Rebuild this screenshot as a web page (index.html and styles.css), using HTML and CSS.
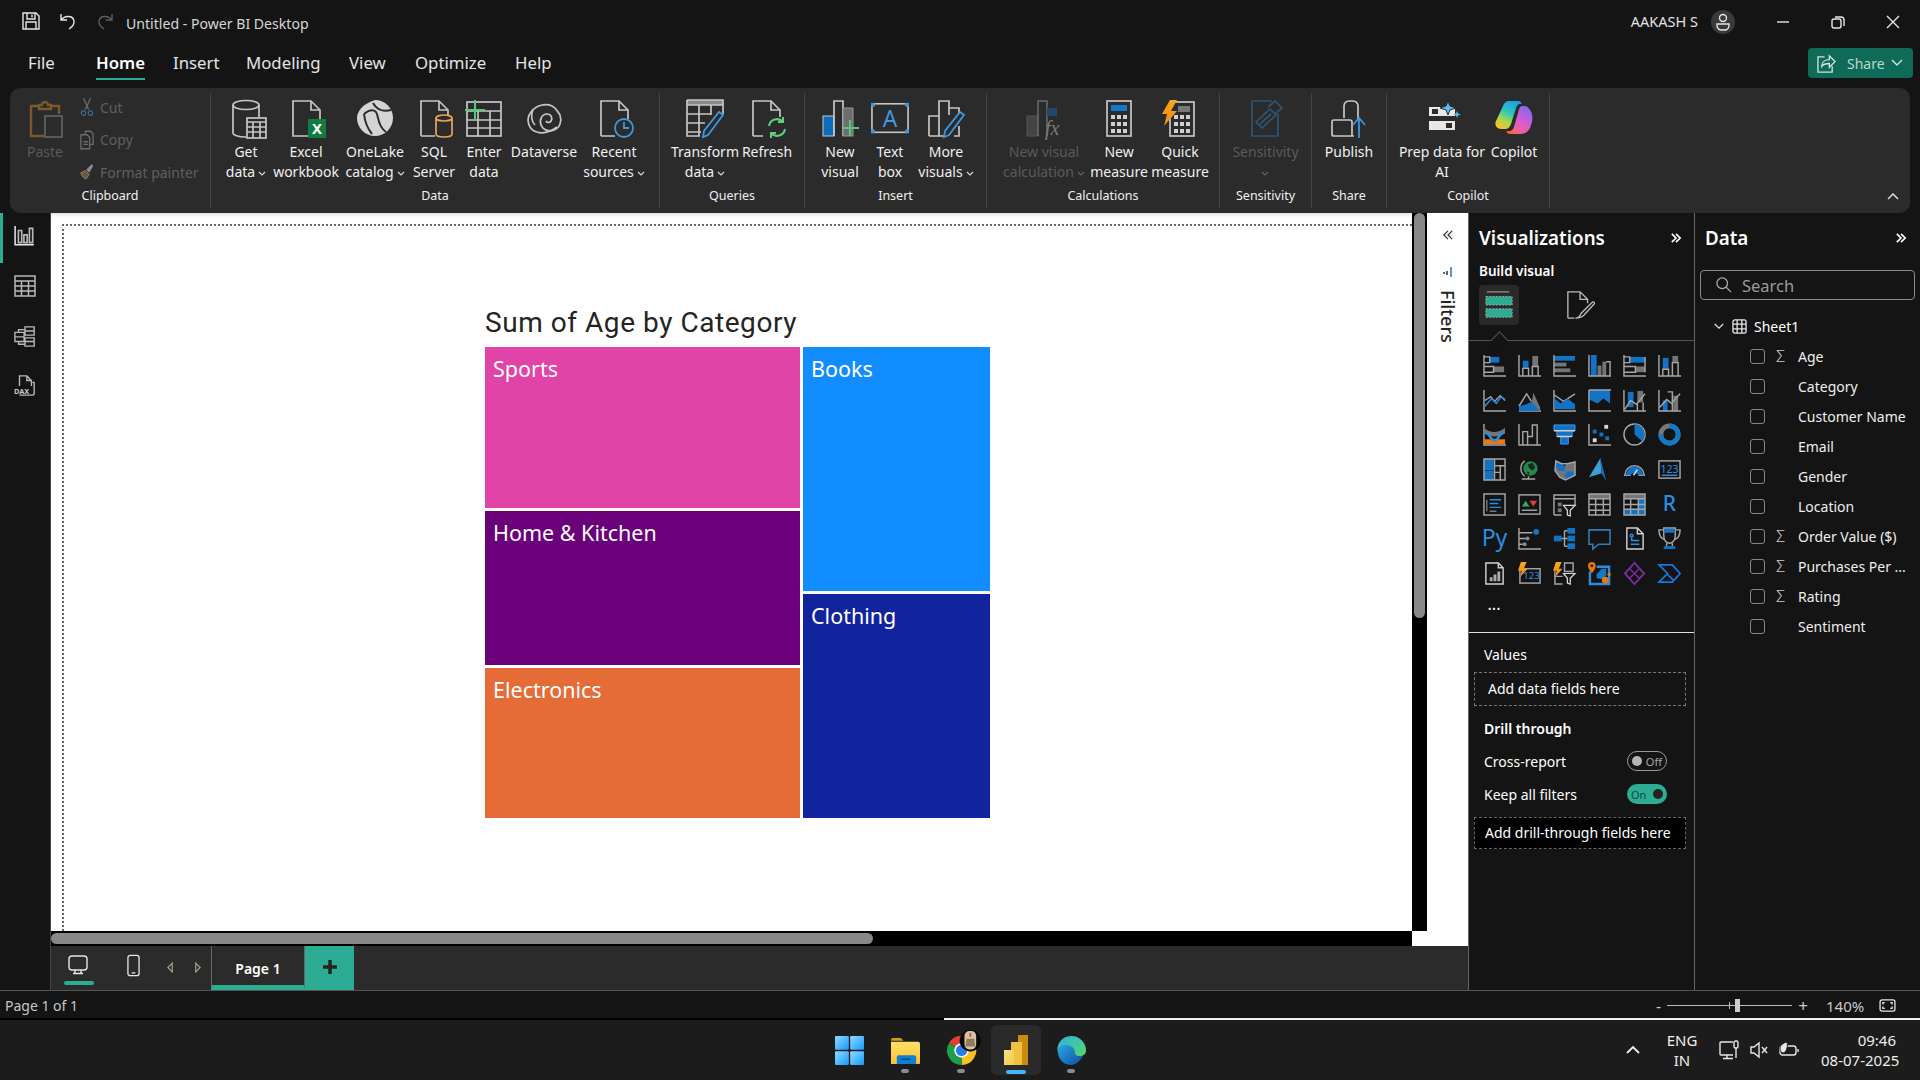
FILE: index.html
```html
<!DOCTYPE html>
<html lang="en">
<head>
<meta charset="utf-8">
<title>Untitled - Power BI Desktop</title>
<link rel="stylesheet" href="styles.css">
</head>
<body>
<svg class="defs" width="0" height="0">
  <defs>
    <linearGradient id="cp2" x1=".7" y1="0" x2=".2" y2="1"><stop offset="0" stop-color="#1c9fe8"/><stop offset=".4" stop-color="#2fc4c0"/><stop offset=".7" stop-color="#a8d84a"/><stop offset="1" stop-color="#ffbe2e"/></linearGradient>
    <linearGradient id="cp3" x1=".8" y1="0" x2=".2" y2="1"><stop offset="0" stop-color="#7a6cf0"/><stop offset=".5" stop-color="#d85cd0"/><stop offset=".8" stop-color="#f0609a"/><stop offset="1" stop-color="#f4692e"/></linearGradient>
    <linearGradient id="win" x1="0" y1="0" x2="1" y2="1"><stop offset="0" stop-color="#8fdcff"/><stop offset="1" stop-color="#1499ff"/></linearGradient>
    <linearGradient id="fold" x1="0" y1="0" x2="0" y2="1"><stop offset="0" stop-color="#ffe06a"/><stop offset="1" stop-color="#fcc22c"/></linearGradient>
    <linearGradient id="pb1" x1="0" y1="0" x2="1" y2="1"><stop offset="0" stop-color="#f9e27e"/><stop offset="1" stop-color="#eec94e"/></linearGradient>
    <linearGradient id="edge" x1="0" y1="0" x2="1" y2="1"><stop offset="0" stop-color="#2fb3e0"/><stop offset="1" stop-color="#53d86a"/></linearGradient>
    <linearGradient id="edge2" x1="0" y1="0" x2="1" y2="1"><stop offset="0" stop-color="#2ba6e8"/><stop offset="1" stop-color="#0c4f9e"/></linearGradient>
    <linearGradient id="lb" x1="0" y1="0" x2="0" y2="1"><stop offset="0" stop-color="#f7a81c"/><stop offset="1" stop-color="#f08a12"/></linearGradient>
  </defs>
</svg>
<div class="app">

<header class="titlebar">
  <svg class="tb-ic" viewBox="0 0 20 20"><path class="w" d="M2 2h13l3 3v13H2zM6 2v6h8V2M5 18v-7h10v7"/><path class="w" d="M11 3.500v3"/></svg>
  <svg class="tb-ic" viewBox="0 0 20 20"><path class="w" d="M3 3v6h6M3 9c4-5 13-5 13 2 0 3-2 5-5 7"/></svg>
  <svg class="tb-ic" viewBox="0 0 20 20"><path class="dim" d="M17 3v6h-6M17 9c-4-5-13-5-13 2 0 3 2 5 5 7"/></svg>
  <span class="doc-title">Untitled - Power BI Desktop</span>
  <span class="user">AAKASH S</span>
  <svg class="avatar" viewBox="0 0 24 24"><circle cx="12" cy="12" r="12" fill="#3a3a3a"/><circle class="w" cx="12" cy="8" r="3.500"/><path class="w" d="M6 14h12v1.500a4.500 4.500 0 0 1-4.500 4.500h-3A4.500 4.500 0 0 1 6 15.500z"/></svg>
  <div class="winbtns">
    <span class="winbtn"><svg viewBox="0 0 14 14"><path class="w" d="M1 7h12"/></svg></span>
    <span class="winbtn"><svg viewBox="0 0 14 14"><rect class="w" x="1" y="4" width="9" height="9" rx="2"/><path class="w" d="M4 2h6a3 3 0 0 1 3 3v6"/></svg></span>
    <span class="winbtn"><svg viewBox="0 0 14 14"><path class="w" d="M1 1l12 12M13 1L1 13"/></svg></span>
  </div>
</header>

<nav class="tabsbar">
  <div class="tabs">
    <span class="tab">File</span>
    <span class="tab on"><b>Home</b></span>
    <span class="tab">Insert</span>
    <span class="tab">Modeling</span>
    <span class="tab">View</span>
    <span class="tab">Optimize</span>
    <span class="tab">Help</span>
  </div>
  <div class="share">
    <svg viewBox="0 0 20 20"><path class="s" d="M8 3H1v16h15v-6"/><path class="s" d="M5 13c0-5 4-7 8-7V2l6 6-6 6v-4c-3 0-6 0-8 3z"/></svg>
    <span>Share</span>
    <svg class="sh-cv" viewBox="0 0 12 8"><path class="s" d="M1 1l5 5 5-5"/></svg>
  </div>
</nav>

<section class="ribbon">
  <div class="grp g-clip">
    <div class="btns clipb">
      <div class="btn off">
        <svg class="ri" viewBox="0 0 38 38"><path class="brn" d="M13 5h3a3 3 0 0 1 6 0h3v4H13zM13 6H5v30h13M25 6h8v8"/><rect class="dimline" x="19" y="16" width="17" height="21"/></svg>
        <span>Paste</span>
      </div>
      <div class="smalls">
        <div class="small"><svg viewBox="0 0 16 22"><path class="dimline" d="M4 1l6 13M12 1L6 14"/><circle class="dimblue" cx="4" cy="18" r="2.500"/><circle class="dimblue" cx="12" cy="18" r="2.500"/></svg><span>Cut</span></div>
        <div class="small"><svg viewBox="0 0 16 22"><path class="dimline" d="M6 5V1h6l3 3v12h-4M1 5h7l3 3v13H1zM4 13h5M4 16h5"/></svg><span>Copy</span></div>
        <div class="small"><svg viewBox="0 0 18 22"><path class="gold" d="M1 12l6-3 5 5-4 6c-3 0-6-4-7-8z"/><path class="dimfill" d="M8 8l7-7 2 2-5 9z"/></svg><span>Format painter</span></div>
      </div>
    </div>
    <div class="gl">Clipboard</div>
  </div>

  <div class="grp g-data">
    <div class="btns">
      <div class="btn"><svg class="ri" viewBox="0 0 38 38"><ellipse class="r" cx="19" cy="5" rx="13" ry="4.500"/><path class="r" d="M6 5v28c0 2 5 4 13 4M32 5v12"/><rect class="r fillbg" x="20" y="18" width="19" height="20"/><path class="r" d="M20 22h19M20 27h19M20 32h19M26 22v16M33 22v16"/></svg><span>Get<br>data<svg class="cv" viewBox="0 0 8 6"><path class="c" d="M1 1l3 3 3-3"/></svg></span></div>
      <div class="btn"><svg class="ri" viewBox="0 0 38 38"><path class="r" d="M6 1h18l9 9v26H6zM24 1v9h9"/><rect x="21" y="19" width="18" height="19" fill="#107c41"/><text class="xl" x="30" y="34">X</text></svg><span>Excel<br>workbook</span></div>
      <div class="btn"><svg class="ri" viewBox="0 0 38 38"><path d="M19 0c10 0 18 8 18 18s-8 18-18 18S1 28 1 18C1 12 6 4 19 0z" fill="#d4d4d4"/><path d="M17 3c4 7 11 9 18 7M8 14c5-4 9-5 12-2 3 4 1 14 10 20M8 14c1 8 3 14 8 20" fill="none" stroke="#2b2b2b" stroke-width="2"/></svg><span>OneLake<br>catalog<svg class="cv" viewBox="0 0 8 6"><path class="c" d="M1 1l3 3 3-3"/></svg></span></div>
      <div class="btn"><svg class="ri" viewBox="0 0 38 38"><path class="r" d="M6 36V1h18l9 9v6M24 1v9h9M6 36h14"/><ellipse class="org" cx="29" cy="18" rx="8" ry="3"/><path class="org" d="M21 18v16c0 4 16 4 16 0V18"/></svg><span>SQL<br>Server</span></div>
      <div class="btn"><svg class="ri" viewBox="0 0 38 38"><rect class="r" x="2" y="2" width="34" height="34"/><path class="r" d="M2 11h34M2 20h34M2 28h34M13 11v25M25 11v25"/><path class="gre" d="M0 10h20M10 0v20"/></svg><span>Enter<br>data</span></div>
      <div class="btn"><svg class="ri" viewBox="0 0 38 38"><path class="r" d="M12 32C4 30 0 20 6 12 11 5 21 3 27 6c4 2 6 6 8 9 2 6 0 13-6 15-5 2-11 0-13-5-2-5 1-11 6-11 4 0 6 4 4 7-1 2-4 2-5 0"/><path class="r" d="M12 32c5 2 14 0 20-5M8 9c-2 6-2 12 2 16"/></svg><span>Dataverse</span></div>
      <div class="btn"><svg class="ri" viewBox="0 0 38 38"><path class="r" d="M6 36V1h18l9 9v9M24 1v9h9M6 36h14"/><circle class="blu" cx="29" cy="28" r="9"/><path class="blu" d="M29 22v6h5"/></svg><span>Recent<br>sources<svg class="cv" viewBox="0 0 8 6"><path class="c" d="M1 1l3 3 3-3"/></svg></span></div>
    </div>
    <div class="gl">Data</div>
  </div>

  <div class="grp g-query">
    <div class="btns">
      <div class="btn"><svg class="ri" viewBox="0 0 38 38"><rect x="1" y="0" width="36" height="5" fill="#8a8a8a"/><path class="r" d="M1 0h36v14M1 0v36h13M1 5h36M1 14h24M1 23h18M1 32h14M13 5v31M25 5v10"/><path class="blu" d="M33 12l4 3-15 20-5 2 1-6z"/></svg><span>Transform<br>data<svg class="cv" viewBox="0 0 8 6"><path class="c" d="M1 1l3 3 3-3"/></svg></span></div>
      <div class="btn"><svg class="ri" viewBox="0 0 38 38"><path class="r" d="M5 36V1h18l9 9v7M23 1v9h9M5 36h10"/><path class="gre2" d="M21 26a8 8 0 0 1 14-4M37 29a8 8 0 0 1-14 4M35 17v5h-5M23 38v-5h5"/></svg><span>Refresh</span></div>
    </div>
    <div class="gl">Queries</div>
  </div>

  <div class="grp g-insert">
    <div class="btns">
      <div class="btn"><svg class="ri" viewBox="0 0 38 38"><rect x="2" y="16" width="11" height="20" fill="#0f6cbd" stroke="#c8c8c8"/><path class="r" d="M13 36V1h9v35"/><rect x="22" y="8" width="10" height="28" fill="#6e6e6e" stroke="#999"/><path class="gre" d="M22 28h16M29 20v16"/></svg><span>New<br>visual</span></div>
      <div class="btn"><svg class="ri" viewBox="0 0 40 38"><rect class="r" x="1" y="3" width="38" height="30"/><g fill="#3f97dc"><rect x="0" y="2" width="4" height="4"/><rect x="36" y="2" width="4" height="4"/><rect x="0" y="30" width="4" height="4"/><rect x="36" y="30" width="4" height="4"/></g><text class="alet" x="20" y="27">A</text></svg><span>Text<br>box</span></div>
      <div class="btn"><svg class="ri" viewBox="0 0 38 38"><path class="r" d="M2 36V16h10M12 36V1h10v14M22 8h10v6M2 36h15M27 36h5V26"/><path class="blu" d="M33 12l4 3-15 20-5 2 1-6z"/></svg><span>More<br>visuals<svg class="cv" viewBox="0 0 8 6"><path class="c" d="M1 1l3 3 3-3"/></svg></span></div>
    </div>
    <div class="gl">Insert</div>
  </div>

  <div class="grp g-calc">
    <div class="btns">
      <div class="btn off"><svg class="ri" viewBox="0 0 38 38"><rect x="2" y="16" width="11" height="20" fill="#444" stroke="#555"/><path class="dimline" d="M13 36V1h9v35"/><rect x="22" y="8" width="10" height="8" fill="#1f4a6e"/><text class="fx" x="20" y="35">fx</text></svg><span>New visual<br>calculation<svg class="cv" viewBox="0 0 8 6"><path class="cd" d="M1 1l3 3 3-3"/></svg></span></div>
      <div class="btn"><svg class="ri" viewBox="0 0 26 38"><rect class="r" x="1" y="1" width="24" height="35"/><rect x="5" y="5" width="16" height="6" fill="#1278c8"/><g fill="#d0d0d0"><rect x="5" y="15" width="4" height="4"/><rect x="11" y="15" width="4" height="4"/><rect x="17" y="15" width="4" height="4"/><rect x="5" y="22" width="4" height="4"/><rect x="11" y="22" width="4" height="4"/><rect x="17" y="22" width="4" height="4"/><rect x="5" y="29" width="4" height="4"/><rect x="11" y="29" width="4" height="4"/><rect x="17" y="29" width="4" height="4"/></g></svg><span>New<br>measure</span></div>
      <div class="btn"><svg class="ri" viewBox="3 0 38 38"><rect class="r" x="12" y="2" width="24" height="34"/><rect x="20" y="6" width="12" height="6" fill="#777"/><g fill="#d0d0d0"><rect x="16" y="15" width="4" height="4"/><rect x="22" y="15" width="4" height="4"/><rect x="28" y="15" width="4" height="4"/><rect x="16" y="22" width="4" height="4"/><rect x="22" y="22" width="4" height="4"/><rect x="28" y="22" width="4" height="4"/><rect x="16" y="29" width="4" height="4"/><rect x="22" y="29" width="4" height="4"/><rect x="28" y="29" width="4" height="4"/></g><path d="M12 0h7l-6 11h6L6 26l3-12H4z" fill="url(#lb)"/></svg><span>Quick<br>measure</span></div>
    </div>
    <div class="gl">Calculations</div>
  </div>

  <div class="grp g-sens">
    <div class="btns">
      <div class="btn off"><svg class="ri" viewBox="0 0 36 38"><path class="sens" d="M24 1H4v35h26V14"/><path class="sens" d="M8 22L22 9l6 6-14 13zM12 24l11-10M20 7l7-6 7 7-7 6"/></svg><span>Sensitivity<br><svg class="cv cv-solo" viewBox="0 0 8 6"><path class="cd" d="M1 1l3 3 3-3"/></svg></span></div>
    </div>
    <div class="gl">Sensitivity</div>
  </div>

  <div class="grp g-share">
    <div class="btns">
      <div class="btn"><svg class="ri" viewBox="0 0 38 38"><path class="r" d="M14 18V6a5 5 0 0 1 5-5h4a5 5 0 0 1 5 5v14M14 20H4a2 2 0 0 0-2 2v12a2 2 0 0 0 2 2h20M14 20h6a2 2 0 0 1 2 2v14"/><path class="blu" d="M29 38V18M23 25l6-7 6 7"/></svg><span>Publish</span></div>
    </div>
    <div class="gl">Share</div>
  </div>

  <div class="grp g-copilot">
    <div class="btns">
      <div class="btn"><svg class="ri" viewBox="0 0 38 38"><rect x="6" y="7" width="26" height="9" fill="#e8e8e8"/><rect x="9" y="9" width="6" height="5" fill="#2b2b2b"/><rect x="6" y="21" width="26" height="9" fill="#e8e8e8"/><rect x="23" y="23" width="6" height="5" fill="#2b2b2b"/><path d="M25 1l2 5 6 2-6 2-2 5-2-5-6-2 6-2z" fill="#5ab8f5" stroke="#2b2b2b"/><path d="M34 11l1 2.500 3 1-3 1-1 2.500-1-2.500-3-1 3-1z" fill="#5ab8f5"/></svg><span>Prep data for<br>AI</span></div>
      <div class="btn"><svg class="ri" viewBox="0 0 38 38"><path d="M27 6c5 0 6 1 8 4 3 4 3 10 1 15-1 5-5 9-10 9H15c-2 0-3-1-4-3 5 1 7-1 8-4l4-14c1-4 2-7 4-7z" fill="url(#cp3)"/><path d="M14 1h9c2 0 3 1 4 3-3-1-5 1-6 4l-5 16c-1 3-3 5-6 5H6c-4 0-7-4-5-8L8 6c1-3 3-5 6-5z" fill="url(#cp2)"/></svg><span>Copilot</span></div>
    </div>
    <div class="gl">Copilot</div>
  </div>
  <svg class="collapse" viewBox="0 0 12 8"><path class="w" d="M1 7l5-5 5 5"/></svg>
</section>

<main class="main">
  <aside class="rail">
    <span class="rail-item on"><svg viewBox="0 0 20 20"><path class="w" d="M1 1v17h17"/><path class="rl" d="M4 5h3v11H4zM9 9h3v7H9zM14 3h3v13h-3z"/></svg></span>
    <span class="rail-item"><svg viewBox="0 0 22 22"><path class="rl" d="M1 1h20v20H1zM1 6h20M1 11h20M1 16h20M7.500 6v15M14.500 6v15"/></svg></span>
    <span class="rail-item"><svg viewBox="0 0 24 24"><path class="rl" d="M12 2h10v9H12zM12 6.500h10M1 8h10v10H1zM1 13h10M12 14h10v9H12zM12 18h10M5 8V5h7M5 18v3h7"/></svg></span>
    <span class="rail-item"><svg viewBox="0 0 24 24"><path class="rl" d="M6 12V1h8l5 5v6M14 1v5h5M20 8h2v12a2 2 0 0 1-2 2H6"/><text class="dax" x="0" y="21">DAX</text></svg></span>
  </aside>

  <div class="center">
    <div class="canvas">
      <div class="page"></div>
      <div class="visual">
        <div class="v-title">Sum of Age by Category</div>
        <div class="treemap">
          <div class="tm-col left">
            <div class="tile sports">Sports</div>
            <div class="tile home">Home &amp; Kitchen</div>
            <div class="tile elec">Electronics</div>
          </div>
          <div class="tm-col right">
            <div class="tile books">Books</div>
            <div class="tile cloth">Clothing</div>
          </div>
        </div>
      </div>
    </div>
    <div class="vscroll"><div class="vthumb"></div></div>
    <aside class="filters">
      <svg class="fil-cv" viewBox="0 0 12 12"><path class="k" d="M6 1L1 6l5 5M11 1L6 6l5 5"/></svg>
      <svg class="fil-ic" viewBox="0 0 12 12"><path class="k" d="M1 7h2M5 5v4"/><path class="kb" d="M9 1v10"/></svg>
      <span class="fil-t">Filters</span>
    </aside>
    <div class="hscroll"><div class="hthumb"></div></div>
    <div class="corner"></div>
    <div class="pagebar">
      <span class="pb-ic dev"><svg viewBox="0 0 20 20"><rect class="w" x="1" y="1" width="18" height="14" rx="3"/><path class="w" d="M7 15v3M13 15v3M5 18.500h10"/></svg></span>
      <span class="pb-ic phone"><svg viewBox="0 0 14 24"><rect class="w" x="1" y="1" width="12" height="22" rx="2.500"/><path class="w" d="M5 20h4"/></svg></span>
      <span class="pb-ar"><svg viewBox="0 0 8 12"><path class="ar" d="M6 1L1 6l5 5z"/></svg></span>
      <span class="pb-ar"><svg viewBox="0 0 8 12"><path class="ar" d="M2 1l5 5-5 5z"/></svg></span>
      <span class="pg-tab">Page 1</span>
      <span class="pg-add"><svg viewBox="0 0 14 14"><path d="M7 0v14M0 7h14" stroke="#252423" stroke-width="3.500"/></svg></span>
    </div>
  </div>

  <section class="viz">
    <div class="p-head"><span>Visualizations</span><svg viewBox="0 0 12 12"><path class="w2" d="M1 1l5 5-5 5M6 1l5 5-5 5"/></svg></div>
    <div class="build">Build visual</div>
    <div class="modes">
      <span class="mode on"><svg viewBox="0 0 32 32"><path d="M3 2h24" stroke="#888" stroke-width="1.500"/><rect x="2" y="7" width="28" height="9" fill="#2bac93" stroke="#aaa" stroke-dasharray="2 1.500"/><rect x="2" y="20" width="28" height="9" fill="#2bac93" stroke="#aaa" stroke-dasharray="2 1.500"/></svg></span>
      <span class="mode"><svg viewBox="0 0 32 32"><path class="lg" d="M2 30V2h13l8 8v4M15 2v8h8M2 30h7"/><path class="lg" d="M10 30c3 0 5-2 6-5l12-12c2-1 3 1 2 2L19 27c-2 2-5 3-9 3z"/></svg></span>
    </div>
    <div class="gallery">
      <i class="notch"></i>
      <svg viewBox="0 0 24 24"><rect class="b" x="7" y="3" width="10" height="6"/><rect class="g" x="11" y="13" width="11" height="6"/><path class="l" d="M1 1v22h23M1 3h6v6H1M1 13h10v6H1"/></svg>
      <svg viewBox="0 0 24 24"><rect class="b" x="5" y="7" width="6" height="8"/><rect class="g" x="15" y="2" width="6" height="11"/><path class="l" d="M1 1v22h23M5 15h6v8H5zM15 13h6v10h-6z"/></svg>
      <svg viewBox="0 0 24 24"><rect class="b" x="1" y="2" width="22" height="5"/><rect class="g" x="1" y="9" width="13" height="4"/><rect class="g" x="1" y="15" width="17" height="4"/><path class="l" d="M1 1v22h23"/></svg>
      <svg viewBox="0 0 24 24"><rect class="b" x="3" y="1" width="6" height="22"/><rect class="g" x="10" y="12" width="4" height="11"/><rect class="g" x="15" y="8" width="4" height="15"/><path class="l" d="M1 1v22h23M19 8h4v15"/></svg>
      <svg viewBox="0 0 24 24"><rect class="b" x="7" y="3" width="16" height="6"/><rect class="g" x="13" y="13" width="10" height="6"/><path class="l" d="M1 1v22h23M1 3h6v6H1M1 13h12v6H1M23 3v16"/></svg>
      <svg viewBox="0 0 24 24"><rect class="b" x="5" y="4" width="6" height="12"/><rect class="g" x="15" y="2" width="6" height="7"/><path class="l" d="M1 1v22h23M5 16h6v7H5zM15 9h6v14h-6z"/></svg>

      <svg viewBox="0 0 24 24"><path class="l" d="M1 1v22h23M2 12l6-4 4 5 6-6 5 5"/><path class="bl" d="M2 18l7-8 5 5 5-7 4 3"/></svg>
      <svg viewBox="0 0 24 24"><path class="g" d="M16 4l7 15v4H13z"/><path class="l" d="M1 18L9 5l5 8M1 23h23"/><path class="b" d="M1 23v-5l8-2 5-3 9 10z"/></svg>
      <svg viewBox="0 0 24 24"><path class="l" d="M1 1v22h23M1 6l10 7 12-8"/><path class="b" d="M1 9l7 6 7-5 8 6v5H2z"/></svg>
      <svg viewBox="0 0 24 24"><path class="b" d="M1 1h22v14l-7-5-6 5-9-4z"/><path class="l" d="M1 1h23M1 1v22h23"/></svg>
      <svg viewBox="0 0 24 24"><rect class="b" x="5" y="3" width="6" height="16"/><rect class="g" x="15" y="2" width="6" height="12"/><path class="l" d="M1 1v22h23M15 14v9M21 14v9M2 21l6-9 6 4 9-11"/></svg>
      <svg viewBox="0 0 24 24"><rect class="b" x="5" y="12" width="5" height="11"/><rect class="g" x="16" y="7" width="5" height="16"/><path class="l" d="M1 1v22h23M10 3h5v20M2 19l7-8 5 4 9-10"/></svg>

      <svg viewBox="0 0 24 24"><path class="l" d="M1 1v22h23"/><path class="g" d="M1 5c7 6 14 6 22 0v6c-7 4-15 4-22 0z"/><path class="org2" d="M1 17h22v5H1z"/><path fill="none" stroke="#2a8ee0" stroke-width="2.500" d="M2 9c5 1 5 9 10 9s5-8 10-9"/></svg>
      <svg viewBox="0 0 24 24"><path class="l" d="M1 1v22h23M5 23V9h5v14M10 14h5V2h5v21"/></svg>
      <svg viewBox="0 0 24 24"><path class="b2" d="M1 2h22v6h-3v6h-4v8H8v-8H4V8H1z"/><path class="l2" d="M1 8h22M4 14h16"/></svg>
      <svg viewBox="0 0 24 24"><path class="l" d="M1 1v22h23"/><rect class="b" x="5" y="7" width="4" height="4"/><rect class="sq" x="17" y="2" width="4" height="4"/><rect class="b" x="12" y="10" width="4" height="4"/><rect class="sq" x="5" y="16" width="4" height="4"/><rect class="b" x="18" y="14" width="4" height="4"/></svg>
      <svg viewBox="0 0 24 24"><circle class="l" cx="12" cy="12" r="11"/><path class="b" d="M12 1a11 11 0 0 1 8 18l-8-7z"/></svg>
      <svg viewBox="0 0 24 24"><circle cx="12" cy="12" r="9" fill="none" stroke="#777" stroke-width="5"/><path d="M12 3a9 9 0 1 1-9 9" fill="none" stroke="#1278c8" stroke-width="5"/></svg>

      <svg viewBox="0 0 24 24"><rect class="b" x="1" y="1" width="10" height="12"/><rect class="b" x="1" y="13.500" width="10" height="9.500"/><path class="l" d="M1 1h22v22H1zM12 1v22M12 8h11M18 8v15M12 15h6"/></svg>
      <svg viewBox="0 0 24 24"><circle cx="13" cy="11" r="7.500" fill="#1f8a4c"/><path d="M10 7l5-2 3 5-3 3-3-2zM9 14l3 1-1 3z" fill="#222"/><path class="l" d="M7 3a10 10 0 0 0 0 16M4 22h14M11 19v3"/></svg>
      <svg viewBox="0 0 24 24"><path class="g" d="M3 9l8 0 4-3 8-2v14l-6 2-4 3-6-3-5-7z"/><path class="b" d="M3 3l6 3 4 3-1 5-6-1-3-5zM14 14l8 0-1 5-6 2-3-2z"/><path class="l" d="M3 3l6 3 6 0 8-2v14l-6 3-4 2-6-3-5-7z"/></svg>
      <svg viewBox="0 0 24 24"><path d="M13 0l-12 20 13-4z" fill="#3aa0d8"/><path d="M13 0l6 24-5-8z" fill="#1b6fae"/></svg>
      <svg viewBox="0 0 24 24"><path class="l" d="M2 18a10 10 0 0 1 20 0M1 18h7M16 18h7"/><path class="b" d="M7 10a10 10 0 0 1 10 0l5 8h-5l-5-3-5 3H2z"/><path d="M11 18l4-6" stroke="#ddd" stroke-width="1.500"/></svg>
      <svg viewBox="0 0 24 24"><rect class="l" x="1" y="3" width="22" height="18"/><text class="n123" x="12" y="16">123</text><path class="bl" d="M4 18h16"/></svg>

      <svg viewBox="0 0 24 24"><rect class="l" x="1" y="1" width="22" height="22"/><path class="bl" d="M7 7h12M7 11h9M7 15h12"/><path d="M4 7v12M7 19h7" stroke="#777" stroke-width="1.500"/></svg>
      <svg viewBox="0 0 24 24"><rect class="l" x="1" y="2" width="22" height="20"/><path d="M4 14l4-6 4 6z" fill="#2fae5a"/><path d="M12 8h8l-4 6z" fill="#e03c3c"/><path class="l" d="M4 18h16"/></svg>
      <svg viewBox="0 0 24 24"><path class="l" d="M1 23V2h22v11M1 6h22M9 23H1"/><rect class="g" x="5" y="10" width="4" height="4"/><rect class="g" x="5" y="16" width="4" height="4"/><path class="f" d="M11 13h12l-5 5v6l-3-1v-5z"/></svg>
      <svg viewBox="0 0 24 24"><rect class="g" x="1" y="1" width="22" height="5"/><path class="l" d="M1 1h22v22H1zM1 6h22M1 12h22M1 18h22M8 6v17M16 6v17"/></svg>
      <svg viewBox="0 0 24 24"><rect class="g" x="1" y="1" width="22" height="5"/><rect class="b" x="16" y="6" width="7" height="17"/><rect class="b" x="1" y="17" width="22" height="6"/><path class="l" d="M1 1h22v22H1zM1 6h22M1 12h22M1 17h22M8 6v17M16 6v17"/></svg>
      <span class="gt r-t">R</span>

      <span class="gt py-t">Py</span>
      <svg viewBox="0 0 24 24"><path class="l" d="M1 1v22h23M1 6h14M1 12h9M1 18h6"/><circle cx="19" cy="5" r="3" fill="#1278c8"/><circle cx="10" cy="12" r="2" fill="#888"/><circle cx="7" cy="18" r="2" fill="#888"/></svg>
      <svg viewBox="0 0 24 24"><rect class="b" x="1" y="9" width="8" height="6"/><rect class="b" x="15" y="1" width="8" height="6"/><rect class="b" x="15" y="9" width="8" height="6"/><rect class="b" x="15" y="17" width="8" height="6"/><path class="l" d="M9 12h6M12 4v16M12 4h3M12 20h3"/></svg>
      <svg viewBox="0 0 24 24"><path class="blsq" d="M1 3h22v15H11l-6 5v-5H1z"/></svg>
      <svg viewBox="0 0 24 24"><path class="l2" d="M4 23V1h11l6 6v16zM15 1v6h6"/><circle class="bl" cx="9" cy="9" r="1.500"/><path class="bl" d="M9 11v3h8M8 18h9"/></svg>
      <svg viewBox="0 0 24 24"><path class="l" d="M6 3H1c0 6 2 9 6 10M18 3h5c0 6-2 9-6 10M9 17v3M15 17v3"/><path class="g2" d="M6 1h12v8c0 5-3 8-6 8s-6-3-6-8z"/><rect class="b" x="6" y="2" width="12" height="4"/><rect class="b" x="6" y="20" width="12" height="3"/></svg>

      <svg viewBox="0 0 24 24"><path class="l2" d="M3 23V1h13l5 5v17zM16 1v5h5"/><path d="M7 20v-4h3v4zM11 20v-7h3v7zM15 20V10h3v10z" fill="#aaa"/></svg>
      <svg viewBox="0 0 24 24"><rect class="l" x="2" y="7" width="21" height="15"/><text class="n123 small123" x="14" y="18">123</text><path d="M9 0H3L0 9h4l-2 7 8-9H6z" fill="url(#lb)"/></svg>
      <svg viewBox="0 0 24 24"><path class="l" d="M2 9v14h8M12 1h9v9h-9zM2 15h8"/><path class="f" d="M11 12h12l-5 5v6l-3-1v-5z"/><path d="M9 0H3L0 9h4l-2 7 8-9H6z" fill="url(#lb)"/></svg>
      <svg viewBox="0 0 24 24"><path d="M9 5H22V23H2V10" fill="none" stroke="#2a8ee0" stroke-width="2.500"/><path d="M9 12c3 0 3-5 7-5h3v7l-4 4-6-1z" fill="#1278c8"/><path d="M4 0a4 4 0 0 1 4 4c0 3-4 8-4 8S0 7 0 4a4 4 0 0 1 4-4z" fill="#e8770f"/><circle cx="4" cy="4" r="1.500" fill="#222"/><circle cx="18" cy="19" r="3.500" fill="#e8770f"/><circle cx="22" cy="13" r="1.800" fill="#e8770f"/></svg>
      <svg viewBox="0 0 24 24"><path d="M12 1l10 11-10 11L2 12z" fill="none" stroke="#7a2a9a" stroke-width="2"/><path d="M7 7l10 10M17 7L7 17" stroke="#7a2a9a" stroke-width="1.500"/></svg>
      <svg viewBox="0 0 24 24"><path d="M1 3h14l8 9-8 9H1l9-9zM9 12l7 7" fill="none" stroke="#1278e0" stroke-width="1.800"/></svg>

      <span class="more">•••</span>
    </div>

    <div class="f-label">Values</div>
    <div class="drop">Add data fields here</div>
    <div class="drill">Drill through</div>
    <div class="tg-row first"><span>Cross-report</span><span class="tg off-t"><i></i><em>Off</em></span></div>
    <div class="tg-row"><span>Keep all filters</span><span class="tg on-t"><em>On</em><i></i></span></div>
    <div class="drop strong">Add drill-through fields here</div>
  </section>

  <section class="data">
    <div class="p-head"><span>Data</span><svg viewBox="0 0 12 12"><path class="w2" d="M1 1l5 5-5 5M6 1l5 5-5 5"/></svg></div>
    <div class="search"><svg viewBox="0 0 18 18"><circle class="m" cx="7" cy="7" r="6"/><path class="m" d="M11.500 11.500L17 17"/></svg><span>Search</span></div>
    <div class="sheet">
      <svg class="sh-c" viewBox="0 0 12 8"><path class="w" d="M1 1l5 5 5-5"/></svg>
      <svg class="sh-t" viewBox="0 0 16 16"><rect class="w" x="1" y="1" width="14" height="14" rx="2"/><path class="w" d="M1 5.500h14M1 10.500h14M5.500 1v14M10.500 1v14"/></svg>
      <span>Sheet1</span>
    </div>
    <ul class="fields">
      <li><i class="cb"></i><span class="sig">Σ</span><span>Age</span></li>
      <li><i class="cb"></i><span class="sig"></span><span>Category</span></li>
      <li><i class="cb"></i><span class="sig"></span><span>Customer Name</span></li>
      <li><i class="cb"></i><span class="sig"></span><span>Email</span></li>
      <li><i class="cb"></i><span class="sig"></span><span>Gender</span></li>
      <li><i class="cb"></i><span class="sig"></span><span>Location</span></li>
      <li><i class="cb"></i><span class="sig">Σ</span><span>Order Value ($)</span></li>
      <li><i class="cb"></i><span class="sig">Σ</span><span>Purchases Per ...</span></li>
      <li><i class="cb"></i><span class="sig">Σ</span><span>Rating</span></li>
      <li><i class="cb"></i><span class="sig"></span><span>Sentiment</span></li>
    </ul>
  </section>
</main>

<footer class="status">
  <span class="st-page">Page 1 of 1</span>
  <div class="zoom">
    <span class="z-m">-</span>
    <span class="z-track"><i class="z-tick"></i><i class="z-thumb"></i></span>
    <span class="z-p">+</span>
    <span class="z-v">140%</span>
    <svg class="z-fit" viewBox="0 0 18 14"><rect class="w" x="1" y="1" width="16" height="12" rx="2"/><path class="w" d="M4 6V4h2M14 8v2h-2M12 4h2v2M6 10H4V8"/></svg>
  </div>
</footer>

<div class="taskbar">
  <span class="tk"><svg viewBox="0 0 30 30"><rect fill="url(#win)" x="0" y="0" width="14.300" height="14.300" rx="1"/><rect fill="url(#win)" x="15.700" y="0" width="14.300" height="14.300" rx="1"/><rect fill="url(#win)" x="0" y="15.700" width="14.300" height="14.300" rx="1"/><rect fill="url(#win)" x="15.700" y="15.700" width="14.300" height="14.300" rx="1"/></svg></span>
  <span class="tk run"><svg viewBox="0 0 30 30"><path d="M0 4a2 2 0 0 1 2-2h8l3 3h-13z" fill="#d99a0b"/><path d="M0 29V6h28a2 2 0 0 1 2 2v20a1 1 0 0 1-1 1z" fill="url(#fold)"/><path d="M6 22a2 2 0 0 1 2-2h16a2 2 0 0 1 2 2v7H6z" fill="#0f7fd4"/><path d="M10 24h10" stroke="#0a4a88" stroke-width="1.500"/></svg></span>
  <span class="tk run"><svg class="chrome" viewBox="0 0 36 36"><g transform="translate(0 6)"><path d="M15 15L2 7.500A15 15 0 0 1 28 7.500z" fill="#e0402f"/><path d="M15 15l13-7.500A15 15 0 0 1 15 30z" fill="#f8c21c"/><path d="M15 15v15A15 15 0 0 1 2 7.500z" fill="#1e9e4a"/><circle cx="15" cy="15" r="7.500" fill="#fff"/><circle cx="15" cy="15" r="5.800" fill="#2a7de8"/></g><circle cx="24" cy="11" r="11" fill="#0a0a0a"/><rect x="18" y="1" width="12" height="19" rx="5" fill="#d8c3a0"/><path d="M24 3v4" stroke="#c0506a" stroke-width="2"/><path d="M20 9h8l1 8h-10z" fill="#8e7c5c"/></svg></span>
  <span class="tk act"><svg viewBox="0 0 24 30"><rect x="14" y="0" width="10" height="30" fill="#c98c10"/><rect x="7" y="7" width="11" height="23" fill="#eec23e"/><rect x="0" y="15" width="10" height="15" fill="url(#pb1)"/></svg><i></i></span>
  <span class="tk run"><svg viewBox="0 0 30 30"><path d="M15 0a15 15 0 0 1 15 15c0 4-3 6-7 6-5 0-6-3-5-5 0-4-5-6-9-4C5 14 3 18 4 22 0 17 0 13 1 10 3 4 8 0 15 0z" fill="url(#edge)"/><path d="M1 13c3-4 8-5 12-3 4 1 5 4 5 6s2 5 5 5c2 0 3 0 4-1-2 5-7 10-13 10C6 30 0 23 1 13z" fill="url(#edge2)"/></svg></span>
  <div class="tray">
    <svg class="t-cv" viewBox="0 0 16 10"><path class="t2" d="M2 8l6-6 6 6"/></svg>
    <div class="lang">ENG<br>IN</div>
    <svg class="t-net" viewBox="0 0 20 20"><path class="w" d="M14 2H2a1 1 0 0 0-1 1v11a1 1 0 0 0 1 1h12M8 15v3M4 18.500h10"/><rect class="w" x="15" y="1" width="4" height="7" rx="1.500"/><path class="w" d="M17 8v10"/></svg>
    <svg class="t-spk" viewBox="0 0 18 16"><path class="w" d="M1 5h3l5-4v14l-5-4H1zM12 5l5 6M17 5l-5 6"/></svg>
    <svg class="t-bat" viewBox="0 0 20 16"><rect class="w" x="1" y="4" width="16" height="9" rx="2.500"/><path class="w" d="M19 7v3"/><path d="M1 7c0-4 3-6 7-7 1 3 0 9-3 11-3 0-4-2-4-4z" fill="#e8e8e8" stroke="#1c1c1c"/></svg>
    <div class="clock">09:46<br>08-07-2025</div>
  </div>
</div>

</div>
</body>
</html>
```
FILE: styles.css
```css
* { box-sizing: border-box; }
html, body { margin: 0; padding: 0; height: 100%; background: #141414; }
body { font-family: "Noto Sans", "Open Sans", sans-serif; color: #fff; overflow: hidden; font-size: 14px; }
.defs { position: absolute; }
svg { display: block; overflow: visible; flex: none; }
ul { list-style: none; margin: 0; padding: 0; }
i, em { font-style: normal; }

/* stroke helpers */
.w { fill: none; stroke: #e6e6e6; stroke-width: 1.4; }
.w2 { fill: none; stroke: #fff; stroke-width: 2; }
.dim { fill: none; stroke: #5e5e5e; stroke-width: 1.4; }
.s { fill: none; stroke: #cfe5df; stroke-width: 1.4; }
.c { fill: none; stroke: #ddd; stroke-width: 1.1; }
.cd { fill: none; stroke: #666; stroke-width: 1.1; }
.r { fill: none; stroke: #c6c6c6; stroke-width: 1.7; }
.fillbg { fill: #2b2b2b; }
.blu { fill: none; stroke: #3f97dc; stroke-width: 1.8; }
.gre { fill: none; stroke: #58c978; stroke-width: 2; }
.gre2 { fill: none; stroke: #5fd07f; stroke-width: 2; }
.org { fill: none; stroke: #e3a55a; stroke-width: 1.7; }
.brn { fill: none; stroke: #7a5a28; stroke-width: 2.4; }
.dimline { fill: none; stroke: #6a6a6a; stroke-width: 1.5; }
.dimblue { fill: none; stroke: #3d6a90; stroke-width: 1.3; }
.gold { fill: #6e5a34; stroke: #8d8d8d; stroke-width: 1; }
.dimfill { fill: #8d8d8d; }
.sens { fill: none; stroke: #2f5472; stroke-width: 1.7; }
.xl { fill: #fff; font: 700 15px "Noto Sans", sans-serif; text-anchor: middle; }
.alet { fill: #3f97dc; font: 400 24px "Noto Sans", sans-serif; text-anchor: middle; }
.fx { fill: #7a7a7a; font: italic 20px "Liberation Serif", serif; }
.k { fill: none; stroke: #333; stroke-width: 1.5; }
.kb { fill: none; stroke: #2a70b8; stroke-width: 1.5; }
.rl { fill: none; stroke: #b8b8b8; stroke-width: 1.5; }
.dax { fill: #c8c8c8; font: 700 8px "Noto Sans", sans-serif; }
.lg { fill: none; stroke: #bdbdbd; stroke-width: 1.4; }
.ar { fill: none; stroke: #b0a78f; stroke-width: 1.3; }
.m { fill: none; stroke: #aaa; stroke-width: 1.4; }
.t2 { fill: none; stroke: #eee; stroke-width: 1.8; }

/* gallery shapes */
.l { fill: none; stroke: #a6a6a6; stroke-width: 1.5; }
.l2 { fill: none; stroke: #d0d0d0; stroke-width: 1.5; }
.bl { fill: none; stroke: #2a8ee0; stroke-width: 1.5; }
.blsq { fill: none; stroke: #2d7fb8; stroke-width: 1.6; }
.b { fill: #1273c4; }
.b2 { fill: #1273c4; stroke: #3c9be6; stroke-width: 1; }
.g { fill: #757575; }
.g2 { fill: none; stroke: #a6a6a6; stroke-width: 1.5; }
.f { fill: #1a1a1a; stroke: #d8d8d8; stroke-width: 1.3; }
.sq { fill: #d8d8d8; }
.org2 { fill: #ea7a12; }
.n123 { fill: #2a8ee0; font: 400 11px "Noto Sans", sans-serif; text-anchor: middle; }
.small123 { font-size: 10px; }

.app { width: 1920px; height: 1080px; display: flex; flex-direction: column; background: #141414; }

/* title bar */
.titlebar { height: 44px; display: flex; align-items: center; padding-left: 21px; flex: none; }
.tb-ic { width: 20px; height: 20px; margin-right: 17px; margin-top: -2px; }
.doc-title { margin-left: -6px; margin-top: 2px; font-size: 14.100px; color: #d6d6d6; }
.user { margin-left: auto; margin-right: 13px; margin-top: -2px; font-size: 14.500px; color: #e2e2e2; }
.avatar { width: 24px; height: 24px; }
.winbtns { display: flex; margin-left: 20px; }
.winbtn { width: 55px; display: flex; justify-content: center; }
.winbtn svg { width: 14px; height: 14px; }

/* tabs */
.tabsbar { height: 44px; flex: none; display: flex; align-items: flex-start; padding-left: 28px; padding-right: 7px; }
.tabs { display: grid; grid-template-columns: 68px 77px 73px 103px 66px 100px auto; font-size: 16.800px; color: #e4e4e4; height: 36px; line-height: 37px; }
.tab b { display: inline-block; height: 36px; font-weight: 600; color: #fff; border-bottom: 2px solid #2bac93; }
.share { margin-left: auto; margin-top: 4px; width: 105px; height: 30px; background: #0f6b58; border-radius: 4px; display: flex; align-items: center; padding-left: 9px; color: #b9d8cf; font-size: 14px; }
.share svg { width: 19px; height: 19px; margin-right: 11px; }
.share .sh-cv { width: 12px; height: 8px; margin: 0 0 0 6px; }

/* ribbon */
.ribbon { position: relative; height: 125px; flex: none; margin: 0 10px; background: #2b2b2b; border-radius: 10px; padding: 5px 0; display: flex; }
.grp { height: 115px; padding-top: 7px; border-right: 1px solid #444; flex: none; }
.btns { height: 86px; display: grid; justify-content: start; }
.g-clip { width: 201px; }
.g-data { width: 449px; }
.g-data .btns { padding-left: 5px; grid-template-columns: 60px 60px 78px 40px 60px 60px 80px; }
.g-query { width: 145px; }
.g-query .btns { padding-left: 5px; grid-template-columns: 80px 44px; }
.g-insert { width: 182px; }
.g-insert .btns { padding-left: 5px; grid-template-columns: 60px 40px 72px; }
.g-calc { width: 233px; }
.g-calc .btns { padding-left: 5px; grid-template-columns: 104px 46px 76px; }
.g-sens { width: 92px; }
.g-sens .btns { grid-template-columns: 91px; }
.g-share { width: 75px; }
.g-share .btns { grid-template-columns: 74px; }
.g-copilot { width: 163px; }
.g-copilot .btns { padding-left: 5px; grid-template-columns: 100px 44px; }
.clipb { display: flex; }
.btn { display: flex; flex-direction: column; align-items: center; font-size: 14px; line-height: 20px; color: #f0f0f0; text-align: center; white-space: nowrap; }
.btn > span { display: block; }
.btn.off { color: #5a5a5a; }
.clipb .btn { width: 70px; }
.ri { width: 38px; height: 38px; margin-bottom: 4px; }
.cv { display: inline-block; width: 8px; height: 6px; margin-left: 3px; vertical-align: 0; }
.cv-solo { margin-left: 0; }
.gl { text-align: center; font-size: 12.500px; line-height: 20px; color: #f0f0f0; }
.smalls { margin-top: -9px; }
.small { height: 32.500px; display: flex; align-items: center; font-size: 14px; color: #5f5f5f; white-space: nowrap; }
.small svg { width: 14px; height: 20px; margin-right: 6px; }
.collapse { position: absolute; right: 11px; bottom: 13px; width: 12px; height: 8px; }

/* main */
.main { flex: 1; min-height: 0; display: flex; }
.rail { width: 51px; flex: none; border-right: 1px solid #444; display: flex; flex-direction: column; }
.rail-item { height: 50px; display: flex; align-items: center; justify-content: center; position: relative; }
.rail-item svg { width: 22px; height: 22px; margin-top: -4px; }
.rail-item.on::before { content: ""; position: absolute; left: 0; top: 0; bottom: 0; width: 3px; background: #2bac93; }

.center { width: 1417px; flex: none; display: grid; grid-template-columns: 1361px 15px 41px; grid-template-rows: 718px 15px 44px; }
.canvas { position: relative; background: #fff; box-shadow: inset 0 5px 4px -4px rgba(0,0,0,.18); overflow: hidden; }
.page { position: absolute; left: 11px; top: 11px; right: 0; bottom: 0; border-left: 2px dotted #666; border-top: 2px dotted #666; }
.visual { position: absolute; left: 434px; top: 92px; width: 506px; }
.v-title { font-family: Roboto, sans-serif; font-size: 28px; letter-spacing: .55px; line-height: 36px; color: #252423; height: 42px; white-space: nowrap; }
.treemap { display: flex; gap: 3px; height: 471px; }
.tm-col { display: flex; flex-direction: column; gap: 3px; }
.tm-col.left { width: 315px; }
.tm-col.right { width: 187px; }
.tile { padding: 7px 8px; font-size: 21.500px; line-height: 30px; color: #fff; }
.sports { height: 161px; background: #E044A7; }
.home { height: 154px; background: #6B007B; }
.elec { flex: 1; background: #E66C37; }
.books { height: 244px; background: #118DFF; }
.cloth { flex: 1; background: #12239E; }

.vscroll { background: #000; position: relative; grid-column: 2; grid-row: 1; }
.vthumb { position: absolute; left: 2px; right: 2px; top: 0; height: 405px; background: #8a8886; border-radius: 6px 6px 6px 6px; }
.filters { grid-column: 3; grid-row: 1 / 3; background: #fff; display: flex; flex-direction: column; align-items: center; }
.fil-cv { width: 10px; height: 10px; margin-top: 17px; }
.fil-ic { width: 12px; height: 12px; margin-top: 26px; }
.fil-t { writing-mode: vertical-rl; color: #252423; font-size: 18px; line-height: 20px; margin-top: 12px; font-weight: 500; }
.hscroll { grid-column: 1; grid-row: 2; background: #000; position: relative; }
.hthumb { position: absolute; left: 0; top: 2px; bottom: 2px; width: 822px; background: #8a8886; border-radius: 6px; }
.corner { grid-column: 2; grid-row: 2; background: #fff; }
.pagebar { grid-column: 1 / 4; grid-row: 3; background: #2b2b2b; display: flex; align-items: stretch; }
.pb-ic { display: flex; position: relative; justify-content: center; }
.pb-ic.dev { width: 54px; padding-top: 9px; }
.pb-ic.dev svg { width: 20px; height: 20px; }
.pb-ic.dev::after { content: ""; position: absolute; left: 13px; width: 30px; top: 35px; height: 4px; border-radius: 2px; background: #2bac93; }
.pb-ic.phone { width: 52px; padding: 8px 0 0 4px; }
.pb-ic.phone svg { width: 13px; height: 23px; }
.pb-ar { width: 27px; display: flex; justify-content: center; padding-top: 16px; }
.pb-ar svg { width: 7px; height: 11px; }
.pg-tab { width: 94px; border-left: 1px solid #666; border-right: 1px solid #666; border-bottom: 5px solid #2bac93; font-weight: 600; font-size: 14px; text-align: center; line-height: 46px; height: 44px; }
.pg-add { width: 49px; background: #2bac93; display: flex; align-items: center; justify-content: center; }
.pg-add svg { width: 14px; height: 14px; margin-top: -3px; }

/* panes */
.viz { width: 227px; flex: none; border-left: 1px solid #666; border-right: 1px solid #666; }
.data { flex: 1; }
.p-head { height: 50px; display: flex; align-items: center; justify-content: space-between; font-size: 18.800px; font-weight: 600; color: #fff; padding: 0 13px 0 10px; }
.p-head svg { width: 10px; height: 10px; }
.data .p-head { padding: 0 14px 0 10px; }
.build { margin: 1px 0 0 10px; line-height: 14px; font-weight: 600; font-size: 13.500px; }
.modes { display: flex; margin: 7px 0 0 10px; gap: 42px; align-items: center; }
.mode { width: 40px; height: 40px; border-radius: 4px; display: flex; align-items: center; justify-content: center; }
.mode.on { background: #2a2a2a; }
.mode svg { width: 30px; height: 30px; }
.gallery { position: relative; margin-top: 15px; height: 293px; border-top: 1px solid #555; border-bottom: 1px solid #e0e0e0; padding: 7px 0 0 8px; display: grid; grid-template-columns: repeat(6, 35px); grid-auto-rows: 34.700px; justify-items: center; align-items: center; }
.gallery svg { width: 23px; height: 23px; }
.notch { position: absolute; left: 24px; top: -7px; width: 13px; height: 13px; background: #141414; border-left: 1px solid #555; border-top: 1px solid #555; transform: rotate(45deg); }
.gt { font-size: 21px; color: #2a8ee0; font-weight: 500; line-height: 24px; }
.py-t { font-size: 23px; font-weight: 400; margin-top: -4px; }
.r-t { margin-top: -3px; }
.more { justify-self: center; align-self: center; font-size: 9px; letter-spacing: 1px; color: #fff; }
.f-label { margin: 12px 0 0 15px; line-height: 20px; font-size: 14px; }
.drop { margin: 7px 8px 0 5px; height: 34px; border: 1px dashed #777; padding-left: 13px; line-height: 32px; font-size: 14px; }
.drop.strong { margin-top: 13px; height: 32px; line-height: 30px; padding-left: 10px; background: #000; border-color: #666; white-space: nowrap; font-size: 14px; }
.drill { margin: 13px 0 0 15px; line-height: 20px; font-weight: 600; font-size: 14px; }
.tg-row { display: flex; align-items: center; justify-content: space-between; height: 20px; margin: 13px 27px 0 15px; font-size: 14px; }
.tg-row.first { margin-top: 12px; }
.tg { width: 40px; height: 20px; border-radius: 10px; display: flex; align-items: center; justify-content: space-between; padding: 0 4px; font-size: 11px; }
.tg i { width: 10px; height: 10px; border-radius: 50%; }
.off-t { border: 1px solid #999; color: #aaa; }
.off-t i { background: #b5b5b5; }
.on-t { background: #2bac93; color: #17463c; }
.on-t i { background: #252423; }

.search { margin: 7px 5px 0 5px; height: 30px; border: 1px solid #8a8a8a; border-radius: 4px; display: flex; align-items: center; padding-left: 15px; color: #9a9a9a; font-size: 16.500px; }
.search svg { width: 16px; height: 16px; margin-right: 10px; }
.sheet { margin-top: 14px; height: 24px; display: flex; align-items: center; padding-left: 19px; font-size: 14px; }
.sh-c { width: 10px; height: 7px; margin-right: 8px; }
.sh-t { width: 15px; height: 15px; margin-right: 7px; }
.fields li { height: 30px; display: flex; align-items: center; padding-left: 55px; font-size: 14px; color: #eee; white-space: nowrap; }
.fields { margin-top: 3px; }
.cb { width: 15px; height: 15px; border: 1px solid #888; border-radius: 3px; margin-right: 11px; flex: none; }
.sig { width: 22px; flex: none; font-size: 16px; line-height: 20px; color: #ccc; font-weight: 300; }

/* status */
.status { height: 30px; flex: none; border-top: 1px solid #555; border-bottom: 2px solid #000; display: flex; align-items: center; position: relative; font-size: 14px; color: #c8c8c8; padding: 2px 0 0 5px; }
.status::after { content: ""; position: absolute; left: 944px; right: 0; bottom: -2px; height: 2px; background: #eee; }
.zoom { display: flex; align-items: center; margin-left: auto; padding-right: 24px; }
.z-m { width: 17px; text-align: center; font-size: 16px; }
.z-track { position: relative; width: 125px; height: 1px; background: #bbb; }
.z-tick { position: absolute; left: 62px; top: -3px; width: 1px; height: 7px; background: #bbb; }
.z-thumb { position: absolute; left: 68px; top: -6px; width: 5px; height: 13px; background: #ccc; }
.z-p { width: 22px; text-align: center; font-size: 17px; }
.z-v { margin-left: 12px; width: 47px; font-size: 15px; }
.z-fit { width: 17px; height: 13px; margin-left: 6px; }

/* taskbar */
.taskbar { height: 60px; flex: none; background: #1c1c1c; display: flex; align-items: center; padding-left: 821px; }
.tk { position: relative; width: 56px; height: 50px; display: flex; align-items: center; justify-content: center; }
.tk svg { width: 29px; height: 29px; }
.tk svg.chrome { width: 35px; height: 35px; margin: -6px 0 0 6px; }
.tk.run::after { content: ""; position: absolute; bottom: 2px; left: 24px; width: 8px; height: 4px; border-radius: 2px; background: #8a8a8a; }
.tk.act { width: 50px; margin: 0 2px; background: #2a2a2a; border-radius: 6px; }
.tk.act svg { width: 24px; height: 30px; }
.tk.act i { position: absolute; bottom: 1px; left: 15px; width: 20px; height: 4px; border-radius: 2px; background: #47b4f5; }
.tray { margin-left: auto; padding-right: 24px; display: flex; align-items: center; font-size: 15px; line-height: 20px; color: #eee; }
.t-cv { width: 16px; height: 10px; margin-right: 21px; }
.lang { width: 40px; text-align: center; margin-right: 17px; }
.t-net { width: 20px; height: 20px; margin-right: 11px; }
.t-spk { width: 18px; height: 16px; margin-right: 11px; }
.t-bat { width: 20px; height: 16px; margin-right: 22px; }
.clock { width: 75px; text-align: right; white-space: nowrap; }
```
